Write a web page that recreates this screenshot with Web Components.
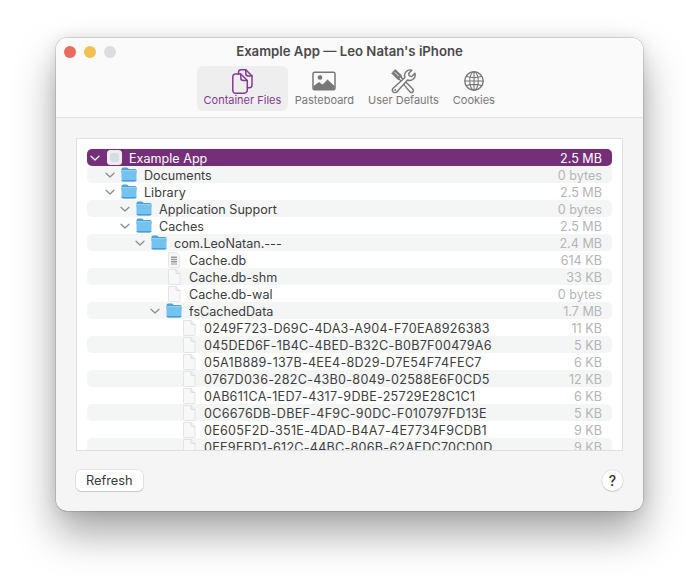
<!DOCTYPE html>
<html>
<head>
<meta charset="utf-8">
<title>Example App</title>
<style>
  html, body { margin: 0; height: 100%; background: #fff; }
  body { padding: 38px 56px 0; box-sizing: border-box; font-family: Inter, "Liberation Sans", sans-serif; }
</style>
</head>
<body>
<mac-window title="Example App — Leo Natan's iPhone">
  <tool-bar slot="toolbar">
    <tool-item label="Container Files" icon="files" selected></tool-item>
    <tool-item label="Pasteboard" icon="picture"></tool-item>
    <tool-item label="User Defaults" icon="tools"></tool-item>
    <tool-item label="Cookies" icon="globe"></tool-item>
  </tool-bar>
  <tree-view>
    <tree-row level="0" icon="app" open selected size="2.5 MB">Example App</tree-row>
    <tree-row level="1" icon="folder" open stripe size="0 bytes">Documents</tree-row>
    <tree-row level="1" icon="folder" open size="2.5 MB">Library</tree-row>
    <tree-row level="2" icon="folder" open stripe size="0 bytes">Application Support</tree-row>
    <tree-row level="2" icon="folder" open size="2.5 MB">Caches</tree-row>
    <tree-row level="3" icon="folder" open stripe size="2.4 MB">com.LeoNatan.---</tree-row>
    <tree-row level="4" icon="db" size="614 KB">Cache.db</tree-row>
    <tree-row level="4" icon="file" stripe size="33 KB">Cache.db-shm</tree-row>
    <tree-row level="4" icon="file" size="0 bytes">Cache.db-wal</tree-row>
    <tree-row level="4" icon="folder" open stripe size="1.7 MB">fsCachedData</tree-row>
    <tree-row level="5" icon="file" size="11 KB">0249F723-D69C-4DA3-A904-F70EA8926383</tree-row>
    <tree-row level="5" icon="file" stripe size="5 KB">045DED6F-1B4C-4BED-B32C-B0B7F00479A6</tree-row>
    <tree-row level="5" icon="file" size="6 KB">05A1B889-137B-4EE4-8D29-D7E54F74FEC7</tree-row>
    <tree-row level="5" icon="file" stripe size="12 KB">0767D036-282C-43B0-8049-02588E6F0CD5</tree-row>
    <tree-row level="5" icon="file" size="6 KB">0AB611CA-1ED7-4317-9DBE-25729E28C1C1</tree-row>
    <tree-row level="5" icon="file" stripe size="5 KB">0C6676DB-DBEF-4F9C-90DC-F010797FD13E</tree-row>
    <tree-row level="5" icon="file" size="9 KB">0E605F2D-351E-4DAD-B4A7-4E7734F9CDB1</tree-row>
    <tree-row level="5" icon="file" stripe size="9 KB">0EE9EBD1-612C-44BC-806B-62AEDC70CD0D</tree-row>
  </tree-view>
  <mac-button slot="footer-left">Refresh</mac-button>
  <help-button slot="footer-right"></help-button>
</mac-window>

<script>
const ICONS = {
  files: `<svg width="21" height="25" viewBox="0 0 21 25" fill="none" stroke="currentColor" stroke-width="1.500" stroke-linejoin="round" stroke-linecap="round">
    <path d="M6.500 5V3.500A2.700 2.700 0 0 1 9.200 .8h4.600l6.200 6.200v9a2.700 2.700 0 0 1-2.700 2.700h-1.800"/>
    <path d="M13.800 .8V4.500a2.500 2.500 0 0 0 2.500 2.500H20"/>
    <path d="M3.500 5h5.300l6.500 6.500v9.700a3 3 0 0 1-3 3H3.500a2.700 2.700 0 0 1-2.700-2.700V7.700A2.700 2.700 0 0 1 3.500 5z"/>
    <path d="M8.800 5v4a2.500 2.500 0 0 0 2.500 2.500h4"/></svg>`,
  picture: `<svg width="24" height="20" viewBox="0 0 24 20"><rect x="1" y="1.200" width="22" height="17.600" rx="1.500" fill="none" stroke="currentColor" stroke-width="1.500"/><circle cx="8" cy="6.500" r="2.300" fill="currentColor"/><path d="M1.500 18.500v-3.500l5.500-4 3.500 2.500 5-5 7 6.500v3.500z" fill="currentColor"/></svg>`,
  tools: `<svg width="25" height="25" viewBox="0 0 25 25" fill="none" stroke="currentColor" stroke-linejoin="round" stroke-linecap="round">
    <path d="M4.500 .8 10.800 7.100 7.200 10.700 .9 4.400z" fill="currentColor" stroke-width="1"/>
    <path d="M4 3.500l3.500 3.500" stroke="#fafafa" stroke-width="1"/>
    <path d="M9.800 8.100 22 20.300a2 2 0 0 1-2.800 2.800L8.100 9.900" fill="#fafafa" stroke-width="1.400"/>
    <path d="M14 8.500A5.500 5.500 0 0 1 20.800 1.200l-3.200 3.200.6 2.500 2.500.6 3.200-3.200A5.500 5.500 0 0 1 16.500 11L6 22.800a2.600 2.600 0 0 1-3.900-3.600z" fill="#fafafa" stroke-width="1.400"/>
    <circle cx="4.200" cy="21" r="1" fill="currentColor" stroke="none"/></svg>`,
  globe: `<svg width="20" height="20" viewBox="0 0 20 20" fill="none" stroke="currentColor" stroke-width="1.100">
    <circle cx="10" cy="10" r="9.200" stroke-width="1.400"/><ellipse cx="10" cy="10" rx="4.300" ry="9.200"/><path d="M10 .8v18.400M.8 10h18.400M2.200 5.200c4.200 1.900 11.400 1.900 15.600 0M2.200 14.800c4.200-1.900 11.400-1.900 15.600 0"/></svg>`
};

const ROW_ICONS = {
  folder: `<svg width="16" height="15" viewBox="0 0 16 15"><path d="M.5 2.200A1.700 1.700 0 0 1 2.200 .5h3.500c.6 0 .9.200 1.200.6l.8 1h6.100c1 0 1.700.7 1.700 1.700v2H.5z" fill="#4fa3d9"/><path d="M.5 3.400h15v9.400c0 .9-.7 1.600-1.600 1.600H2.100c-.9 0-1.600-.7-1.600-1.600z" fill="#74c2ef"/><rect x=".5" y="3.300" width="15" height=".8" fill="#a4d9f6"/><path d="M.5 13h15c0 .8-.7 1.400-1.600 1.400H2.100c-.9 0-1.600-.6-1.600-1.400z" fill="#4c9dd0"/></svg>`,
  file: `<svg width="14" height="16" viewBox="0 0 14 16"><path d="M1.500 .5h7.500l4 4v10.200c0 .4-.3.800-.8.800H2.300a.8.800 0 0 1-.8-.8z" fill="#f8f8f8" stroke="#e4e4e4"/><path d="M9 .5v3.200c0 .5.300.8.800.8H13" fill="#eee" stroke="#dcdcdc"/></svg>`,
  db: `<svg width="14" height="16" viewBox="0 0 14 16"><path d="M1.500 .5h8l3 3v11.200c0 .4-.3.800-.8.800H2.300a.8.800 0 0 1-.8-.8z" fill="#f6f6f6" stroke="#e6e6e6"/><path d="M4 4.500h6v1.500H4zM4 6.800h6v1.500H4zM4 9.100h6v1.500H4zM4 11.400h6v1H4z" fill="#9a9a9a"/></svg>`,
  app: `<svg width="15" height="15" viewBox="0 0 15 15"><rect width="15" height="15" rx="3.500" fill="#eceeee"/><rect x="3" y="3" width="9" height="9" rx="3" fill="#d5dfe1"/></svg>`
};

customElements.define("mac-window", class extends HTMLElement {
  constructor() {
    super();
    const root = this.attachShadow({ mode: "open" });
    root.innerHTML = `
    <style>
      :host {
        display: flex;
        flex-direction: column;
        width: 587px;
        height: 473px;
        box-sizing: border-box;
        background: #f5f5f5;
        border-radius: 11px;
        overflow: hidden;
        box-shadow: 0 0 0 .5px rgba(0,0,0,.22), 0 22px 42px rgba(0,0,0,.36), 0 0 14px rgba(0,0,0,.1);
      }
      .head {
        position: relative;
        height: 80px;
        box-sizing: border-box;
        background: #fafafa;
        border-bottom: 1px solid #e0e0e0;
      }
      .lights {
        position: absolute;
        left: 8px;
        top: 8px;
        display: flex;
        gap: 8px;
      }
      .lights i {
        width: 12px;
        height: 12px;
        border-radius: 50%;
      }
      h1 {
        margin: 0;
        padding-top: 5px;
        font-size: 13.200px;
        line-height: 16px;
        font-weight: 600;
        text-align: center;
        color: #4a4a4a;
      }
      .body {
        flex: 1;
        display: flex;
        flex-direction: column;
        padding: 20px 20px 0;
      }
      .footer {
        display: flex;
        justify-content: space-between;
        align-items: center;
        padding: 19px 0 0;
      }
    </style>
    <div class="head">
      <div class="lights"><i style="background:#ed6a5e"></i><i style="background:#f5bf4f"></i><i style="background:#dcdcdc"></i></div>
      <h1></h1>
      <slot name="toolbar"></slot>
    </div>
    <div class="body">
      <slot></slot>
      <div class="footer"><slot name="footer-left"></slot><slot name="footer-right"></slot></div>
    </div>
    `;
    root.querySelector("h1").textContent = this.getAttribute("title");
    this.removeAttribute("title");
  }
});

customElements.define("tool-bar", class extends HTMLElement {
  constructor() {
    super();
    this.attachShadow({ mode: "open" }).innerHTML = `
    <style>
      :host {
        display: flex;
        padding-left: 141px;
        margin-top: 7px;
      }
    </style>
    <slot></slot>`;
  }
});

customElements.define("tool-item", class extends HTMLElement {
  constructor() {
    super();
    const root = this.attachShadow({ mode: "open" });
    const label = this.getAttribute("label");
    root.innerHTML = `
    <style>
      :host {
        display: flex;
        flex-direction: column;
        align-items: center;
        box-sizing: border-box;
        height: 45px;
        padding: 0 7px;
        border-radius: 6px;
        color: #777;
      }
      :host([selected]) {
        color: #833a94;
        background: #eeeeee;
        padding: 0 6.500px;
      }
      .ic {
        height: 24px;
        margin-top: 3px;
        display: flex;
        align-items: center;
        justify-content: center;
      }
      span {
        font-size: 11px;
        line-height: 14px;
        white-space: nowrap;
      }
    </style>
    <div class="ic">${ICONS[this.getAttribute("icon")]}</div>
    <span>${label}</span>`;
  }
});

customElements.define("tree-view", class extends HTMLElement {
  constructor() {
    super();
    this.attachShadow({ mode: "open" }).innerHTML = `
    <style>
      :host {
        display: block;
        height: 313px;
        box-sizing: border-box;
        background: #fff;
        border: 1px solid #e0e0e0;
        padding: 10px 10px 0;
        overflow: hidden;
      }
    </style>
    <slot></slot>`;
  }
});

customElements.define("tree-row", class extends HTMLElement {
  constructor() {
    super();
    const root = this.attachShadow({ mode: "open" });
    const level = Number(this.getAttribute("level"));
    const chevron = this.hasAttribute("open")
      ? `<svg width="10" height="10" viewBox="0 0 10 10" fill="none" stroke="currentColor" stroke-width="1.200" stroke-linecap="round" stroke-linejoin="round"><path d="M1 3.200l4 3.800 4-3.800"/></svg>`
      : "";
    root.innerHTML = `
    <style>
      :host {
        display: flex;
        align-items: center;
        height: 17px;
        box-sizing: border-box;
        border-radius: 5px;
        font-size: 12.600px;
        color: #3d3d3d;
      }
      :host([stripe]) { background: #f4f5f5; }
      :host([selected]) { background: #742f78; color: #fff; }
      :host([level="5"]) .name { letter-spacing: .25px; }
      .chev {
        width: 10px;
        height: 10px;
        margin-left: ${3 + level * 15}px;
        margin-right: 6px;
        color: #8a8a8a;
        display: flex;
      }
      :host([selected]) .chev { color: #fff; }
      .icon {
        width: 16px;
        display: flex;
        justify-content: center;
        margin-right: 7px;
      }
      .name {
        flex: 1;
        padding-top: 1px;
        white-space: nowrap;
        overflow: hidden;
      }
      .size {
        color: #b5b5b5;
        padding-top: 1px;
        padding-right: 10px;
        white-space: nowrap;
      }
      :host([selected]) .size { color: #fff; }
    </style>
    <div class="chev">${chevron}</div>
    <div class="icon">${ROW_ICONS[this.getAttribute("icon")]}</div>
    <div class="name"><slot></slot></div>
    <div class="size">${this.getAttribute("size")}</div>`;
  }
});

customElements.define("mac-button", class extends HTMLElement {
  constructor() {
    super();
    this.attachShadow({ mode: "open" }).innerHTML = `
    <style>
      :host {
        display: block;
        height: 21px;
        padding: 0 10px;
        line-height: 21px;
        box-sizing: border-box;
        font-size: 12.800px;
        color: #3a3a3a;
        background: #fff;
        border-radius: 5px;
        box-shadow: 0 0 0 .5px rgba(0,0,0,.14), 0 1px 1px rgba(0,0,0,.12);
      }
    </style>
    <slot></slot>`;
  }
});

customElements.define("help-button", class extends HTMLElement {
  constructor() {
    super();
    this.attachShadow({ mode: "open" }).innerHTML = `
    <style>
      :host {
        display: block;
        width: 21px;
        height: 21px;
        border-radius: 50%;
        background: #fff;
        text-align: center;
        line-height: 21px;
        font-size: 14px;
        font-weight: 500;
        color: #2e2e2e;
        box-shadow: 0 0 0 .5px rgba(0,0,0,.12), 0 1px 1px rgba(0,0,0,.12);
      }
    </style>
    ?`;
  }
});
</script>
</body>
</html>
